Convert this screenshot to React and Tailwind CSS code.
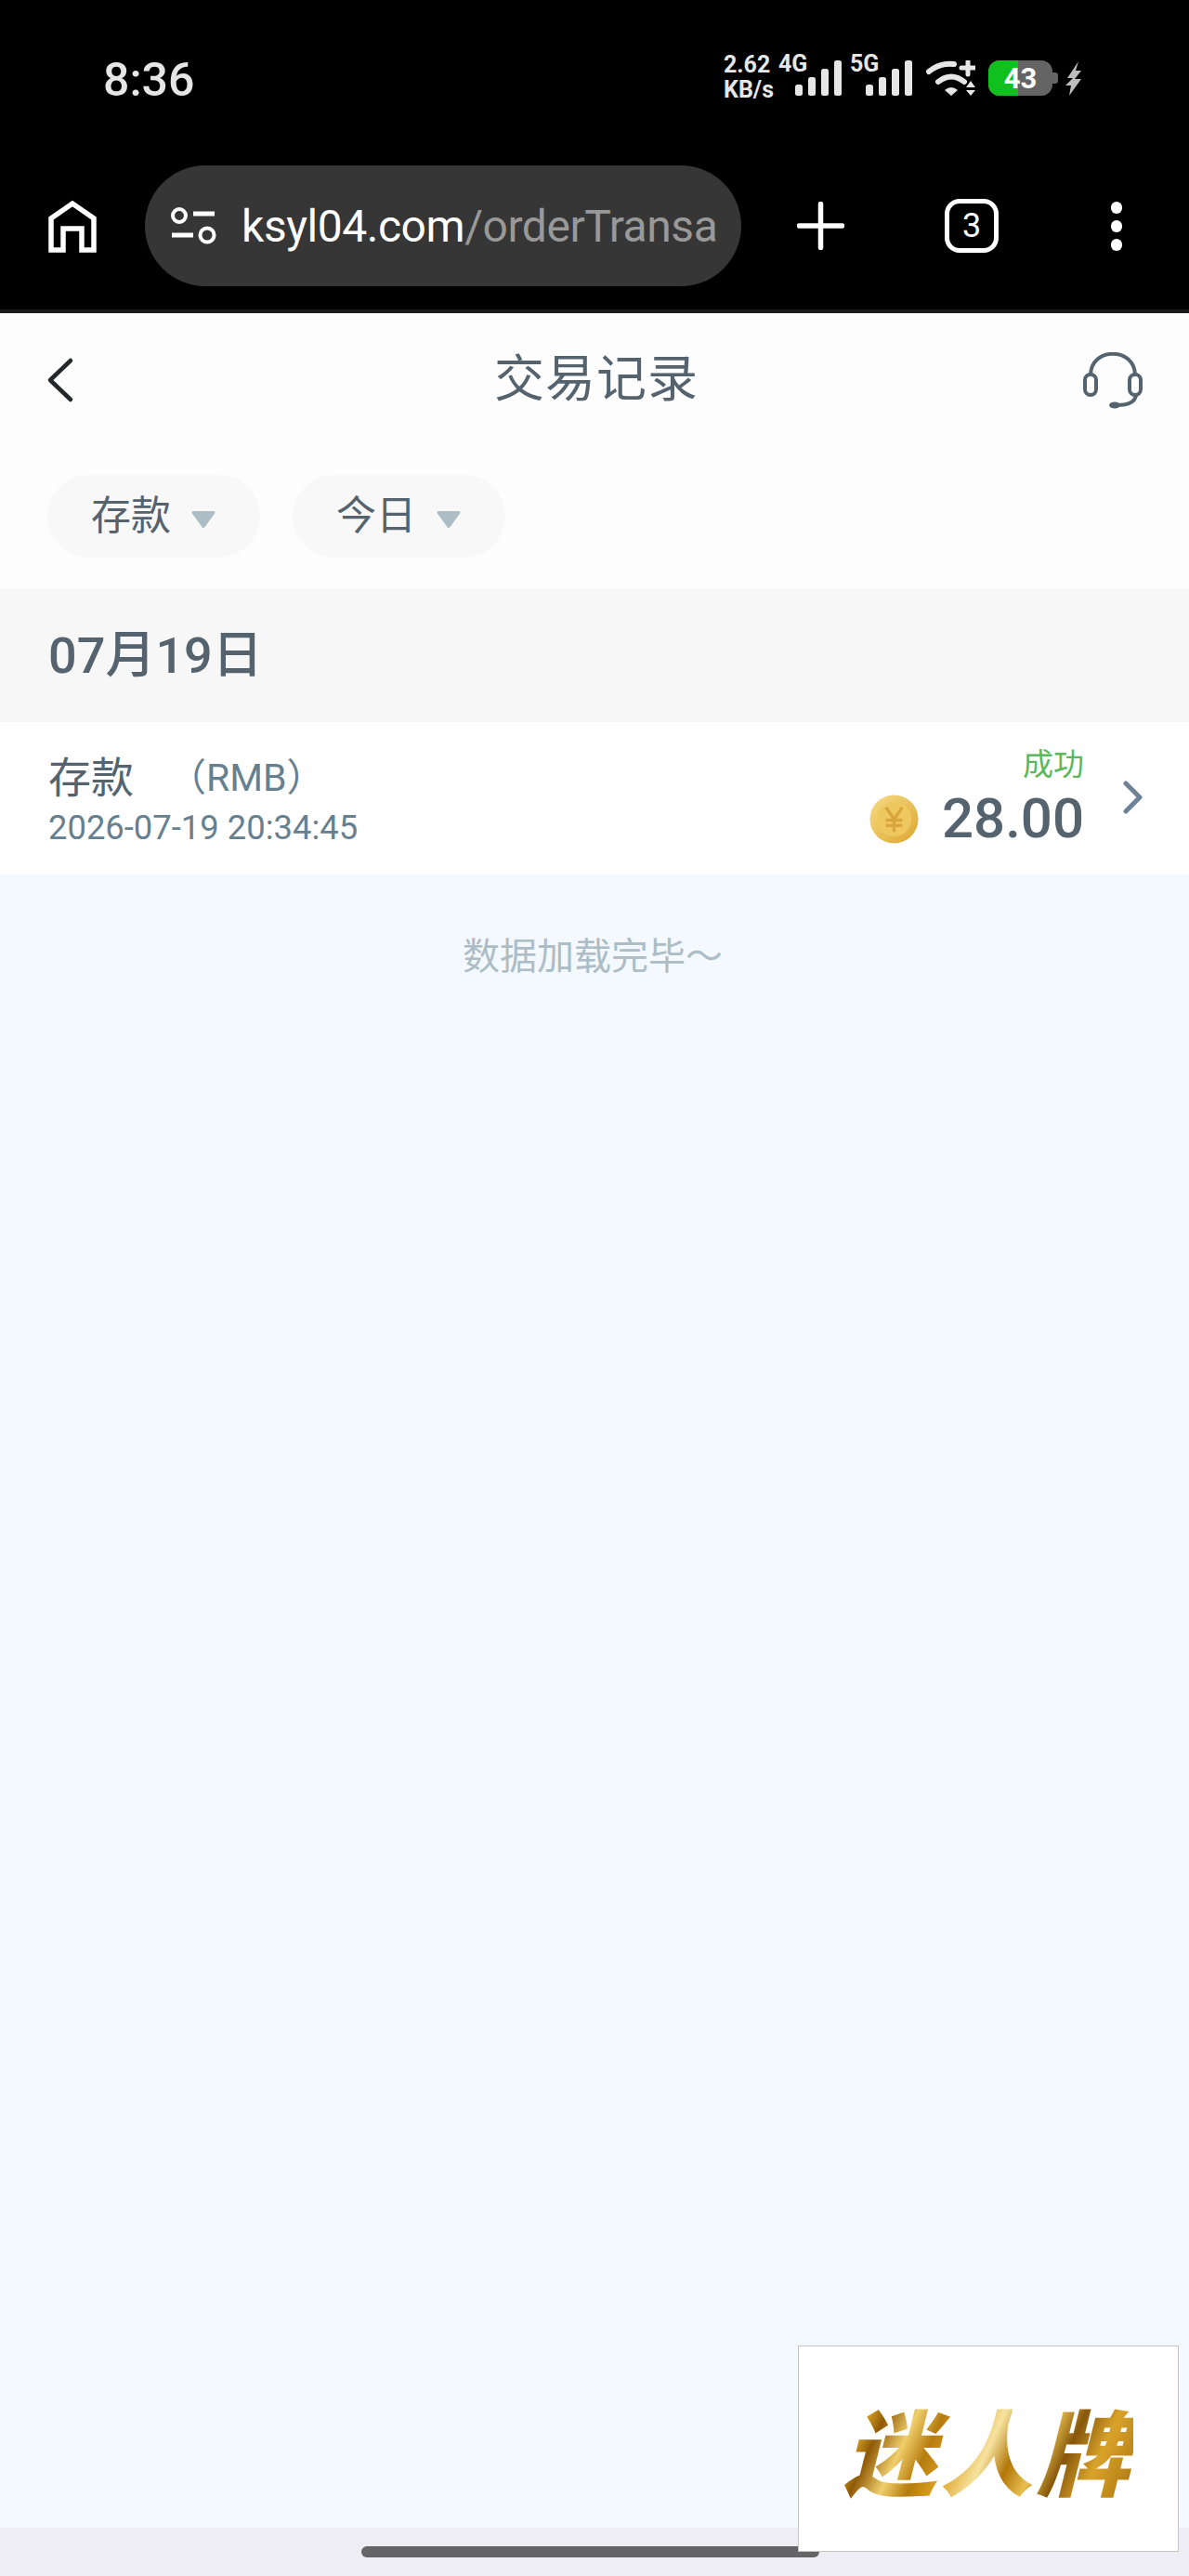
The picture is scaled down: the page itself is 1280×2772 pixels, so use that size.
import React from 'react';

const cjk = "font-['Roboto','Noto_Sans_CJK_SC',sans-serif]";

const Bars = () => (
  <svg width="50" height="38" viewBox="0 0 50 38" fill="#e6e6e6">
    <rect x="0" y="26" width="8" height="12" rx="2.5" />
    <rect x="14" y="18" width="8" height="20" rx="2.5" />
    <rect x="28" y="9" width="8" height="29" rx="2.5" />
    <rect x="42" y="0" width="8" height="38" rx="2.5" />
  </svg>
);

const StatusBar = () => (
  <div className="h-[100px] flex pl-[111px] pr-[115px] pt-[60px] text-[#e6e6e6] font-['Roboto',sans-serif]">
    <span className="text-[50px] leading-[50px] font-medium mt-[1px]">8:36</span>
    <div className="ml-auto flex items-start h-[44px]">
      <div className="w-[52px] text-[25px] leading-[27px] font-bold whitespace-nowrap -mt-[4px]">
        <div>2.62</div>
        <div>KB/s</div>
      </div>
      <div className="w-[68px] ml-[7px] relative h-[44px]">
        <span className="block text-[25px] leading-[22px] font-bold -mt-[2px]">4G</span>
        <div className="absolute left-[18px] top-[5px]"><Bars /></div>
      </div>
      <div className="w-[67px] ml-[9px] relative h-[44px]">
        <span className="block text-[25px] leading-[22px] font-bold -mt-[2px]">5G</span>
        <div className="absolute left-[17px] top-[5px]"><Bars /></div>
      </div>
      <svg className="ml-[15px] mt-[5px]" width="53" height="38" viewBox="0 0 53 38" fill="none">
        <path d="M3 12 Q15 2 30 4" stroke="#e6e6e6" strokeWidth="6" strokeLinecap="round" />
        <path d="M13 23 Q27 12 41 23" stroke="#e6e6e6" strokeWidth="6" strokeLinecap="round" />
        <path d="M20 32 Q27 26 34 32 L27 38 Z" fill="#e6e6e6" />
        <path d="M45 1 V15 M38 8 H52" stroke="#e6e6e6" strokeWidth="5" strokeLinecap="round" />
        <path d="M48 22 L53 29 H43 Z M48 38 L53 32 H43 Z" fill="#e6e6e6" />
      </svg>
      <div className="ml-[14px] mt-[5px] relative w-[69px] h-[38px] rounded-[12px] bg-[#646464] overflow-hidden">
        <div className="w-[32px] h-full bg-[#0fc01f]" />
        <span className="absolute inset-0 flex items-center justify-center text-[31px] leading-none font-bold text-white">43</span>
      </div>
      <div className="mt-[18px] w-[6px] h-[12px] rounded-r-[3px] bg-[#646464]" />
      <svg className="ml-[8px] mt-[6px]" width="18" height="37" viewBox="0 0 18 37" fill="#bdbdbd">
        <path d="M14 0 L2 18 L8 18 L0 26 L6 26 L4 37 L17 19 L10 19 L17 10 L11 10 Z" />
      </svg>
    </div>
  </div>
);

const BrowserBar = () => (
  <div className="h-[233px] flex items-start text-white font-['Roboto',sans-serif]">
    <svg className="ml-[52px] mt-[115px] shrink-0" width="52" height="57" viewBox="0 0 52 57" fill="none">
      <path d="M3 54 V20 L26 4 L49 20 V54 H36 V31 H16 V54 Z" stroke="white" strokeWidth="5.5" />
    </svg>
    <div className="ml-[52px] mt-[78px] w-[642px] h-[130px] shrink-0 rounded-full bg-[#363636] flex items-center pl-[28px] overflow-hidden">
      <svg width="49" height="40" viewBox="0 0 49 40" fill="none" className="shrink-0">
        <circle cx="9" cy="9" r="7" stroke="white" strokeWidth="4" />
        <circle cx="39" cy="30" r="7.5" stroke="white" strokeWidth="4" />
        <path d="M24 7 H47 M1 30 H24" stroke="white" strokeWidth="5" />
      </svg>
      <span className="ml-[27px] mt-[2px] text-[48px] leading-none tracking-[-0.45px] whitespace-nowrap">
        ksyl04.com<span className="text-[#999999]">/orderTransa</span>
      </span>
    </div>
    <svg className="ml-[60px] mt-[117px] shrink-0" width="51" height="52" viewBox="0 0 51 52" fill="none">
      <path d="M25.5 2.5 V49.5 M2.5 26 H48.5" stroke="white" strokeWidth="5.5" strokeLinecap="round" />
    </svg>
    <div className="ml-[108px] mt-[114px] w-[58px] h-[58px] shrink-0 rounded-[16px] border-[5px] border-white flex items-center justify-center text-[36px] leading-none font-normal">3</div>
    <div className="ml-[121px] mt-[117px] flex flex-col gap-[7px]">
      <div className="w-[12px] h-[13px] rounded-full bg-white" />
      <div className="w-[12px] h-[13px] rounded-full bg-white" />
      <div className="w-[12px] h-[13px] rounded-full bg-white" />
    </div>
  </div>
);

const Filter = ({ label }) => (
  <div className="w-[229px] h-[89px] rounded-full bg-[#f8f8f8] flex items-center pl-[47px] text-[43px] leading-none text-[#55636f]">
    <span>{label}</span>
    <svg className="ml-[21px] mt-[6px]" width="28" height="20" viewBox="0 0 28 20">
      <path d="M3 2.5 H25 L14 17.5 Z" fill="#acbdc5" stroke="#acbdc5" strokeWidth="3" strokeLinejoin="round" />
    </svg>
  </div>
);

const Coin = () => (
  <svg width="53" height="53" viewBox="0 0 54 54">
    <defs>
      <linearGradient id="coin" x1="0" y1="0" x2="1" y2="1">
        <stop offset="0" stopColor="#f7dd85" />
        <stop offset="1" stopColor="#dba52f" />
      </linearGradient>
    </defs>
    <circle cx="27" cy="27" r="26.5" fill="url(#coin)" />
    <circle cx="27" cy="27" r="19" fill="#eec75f" />
    <path d="M18 14 L27 27 L36 14 M27 27 V41 M18 28 H36 M18 34 H36" stroke="#d8a63c" strokeWidth="3.5" fill="none" />
  </svg>
);

const Logo = () => (
  <div className="absolute left-[859px] top-[2524px] w-[410px] h-[222px] bg-white border border-[#c4c4c4] flex items-center justify-center">
    <span className="text-[100px] leading-[110px] font-black italic tracking-[4px] whitespace-nowrap text-transparent bg-clip-text bg-[linear-gradient(115deg,#a86f08_0%,#e6b32e_8%,#8f5a06_15%,#f0cf6c_24%,#b57c0e_32%,#dca021_40%,#f6e3a0_50%,#b27708_58%,#e8c050_66%,#87560a_74%,#d9a32a_84%,#a8720e_100%)] font-['Noto_Sans_CJK_SC',sans-serif]">
      迷人牌
    </span>
  </div>
);

export default function App() {
  return (
    <div className={`relative w-[1280px] h-[2772px] flex flex-col overflow-hidden bg-[#f4f8ff] ${cjk}`}>
      <div className="bg-black h-[333px] flex flex-col">
        <StatusBar />
        <BrowserBar />
      </div>
      <div className="h-[4px] bg-[#1c1c1c]" />

      <div className="h-[296px] bg-[#fdfdfd]">
        <div className="h-[144px] flex items-center pl-[50px] pr-[50px]">
          <svg width="30" height="52" viewBox="0 0 30 52" fill="none" className="shrink-0">
            <path d="M26 5 L4 26 L26 47" stroke="#24282b" strokeWidth="4.5" strokeLinecap="round" strokeLinejoin="round" />
          </svg>
          <span className="flex-1 pl-[38px] text-center text-[54px] leading-none font-normal text-[#55636f] tracking-[1px]">交易记录</span>
          <svg width="64" height="61" viewBox="0 0 64 61" fill="none" stroke="#55636f" strokeWidth="4" className="shrink-0">
            <path d="M8 25 C8 -6 56 -6 56 25" />
            <rect x="2" y="24" width="12" height="22" rx="6" />
            <rect x="50" y="24" width="12" height="22" rx="6" />
            <path d="M57 46 C56 54 48 57 36 57" />
            <ellipse cx="34" cy="57" rx="6" ry="3.5" fill="#55636f" stroke="none" />
          </svg>
        </div>
        <div className="flex gap-[35px] pl-[51px] pt-[30px]">
          <Filter label="存款" />
          <Filter label="今日" />
        </div>
      </div>

      <div className="h-[144px] bg-[#f7f7f7] flex items-center pl-[52px] pt-[2px] text-[54px] leading-none text-[#55636f] font-medium">
        07月19日
      </div>

      <div className="h-[164px] bg-white flex pl-[52px] pr-[50px] text-[#55636f]">
        <div className="pt-[36px]">
          <div className="text-[46px] leading-[48px] flex">
            <span>存款</span>
            <span className="ml-[37px] text-[41px] text-[#66808f]">（RMB）</span>
          </div>
          <div className="mt-[11px] text-[36.4px] leading-[38px] text-[#66808f]">2026-07-19 20:34:45</div>
        </div>
        <div className="ml-auto flex flex-col items-end pt-[26px] mr-[41px]">
          <span className="text-[33px] leading-[40px] text-[#5cb85c]">成功</span>
          <div className="flex items-center mt-[7px]">
            <Coin />
            <span className="ml-[25px] text-[60px] leading-[62px] font-medium">28.00</span>
          </div>
        </div>
        <svg className="mt-[63px]" width="22" height="36" viewBox="0 0 22 36" fill="none">
          <path d="M4 3 L19 18 L4 33" stroke="#6d8296" strokeWidth="5" strokeLinecap="round" strokeLinejoin="round" />
        </svg>
      </div>

      <div className="flex-1 flex flex-col">
        <div className="flex-1">
          <div className="pt-[65px] text-center text-[40px] leading-[48px] text-[#acbdc5] pr-[4px]">数据加载完毕～</div>
        </div>
        <div className="h-[52px] bg-[#eeedf3] pl-[389px] pt-[20px]">
          <div className="w-[493px] h-[12px] rounded-full bg-[#656567]" />
        </div>
      </div>

      <Logo />
    </div>
  );
}
